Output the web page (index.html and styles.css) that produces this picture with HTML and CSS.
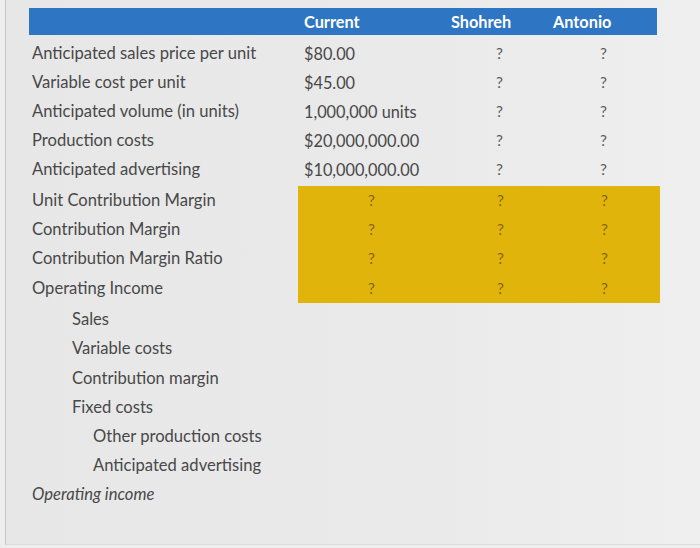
FILE: index.html
```html
<!DOCTYPE html>
<html>
<head>
<meta charset="utf-8">
<link rel="stylesheet" href="styles.css">
</head>
<body>
<div class="frame">
  <div class="sheet">
    <div class="row head">
      <div class="cell"></div>
      <div class="cell h-cur">Current</div>
      <div class="cell h-sho">Shohreh</div>
      <div class="cell h-ant">Antonio</div>
    </div>
    <div class="group first">
      <div class="row">
        <div class="cell label">Anticipated sales price per unit</div>
        <div class="cell val">$80.00</div>
        <div class="cell q3">?</div>
        <div class="cell q4">?</div>
      </div>
      <div class="row">
        <div class="cell label">Variable cost per unit</div>
        <div class="cell val">$45.00</div>
        <div class="cell q3">?</div>
        <div class="cell q4">?</div>
      </div>
      <div class="row">
        <div class="cell label">Anticipated volume (in units)</div>
        <div class="cell val">1,000,000 units</div>
        <div class="cell q3">?</div>
        <div class="cell q4">?</div>
      </div>
      <div class="row">
        <div class="cell label">Production costs</div>
        <div class="cell val">$20,000,000.00</div>
        <div class="cell q3">?</div>
        <div class="cell q4">?</div>
      </div>
      <div class="row">
        <div class="cell label">Anticipated advertising</div>
        <div class="cell val">$10,000,000.00</div>
        <div class="cell q3">?</div>
        <div class="cell q4">?</div>
      </div>
    </div>
    <div class="group yellow-group">
      <div class="row">
        <div class="cell label">Unit Contribution Margin</div>
        <div class="cell y y2">?</div>
        <div class="cell y y3">?</div>
        <div class="cell y y4">?</div>
      </div>
      <div class="row">
        <div class="cell label">Contribution Margin</div>
        <div class="cell y y2">?</div>
        <div class="cell y y3">?</div>
        <div class="cell y y4">?</div>
      </div>
      <div class="row">
        <div class="cell label">Contribution Margin Ratio</div>
        <div class="cell y y2">?</div>
        <div class="cell y y3">?</div>
        <div class="cell y y4">?</div>
      </div>
      <div class="row">
        <div class="cell label">Operating Income</div>
        <div class="cell y y2">?</div>
        <div class="cell y y3">?</div>
        <div class="cell y y4">?</div>
      </div>
    </div>
    <div class="group rest">
      <div class="line indent1">Sales</div>
      <div class="line indent1">Variable costs</div>
      <div class="line indent1">Contribution margin</div>
      <div class="line indent1">Fixed costs</div>
      <div class="line indent2">Other production costs</div>
      <div class="line indent2">Anticipated advertising</div>
      <div class="line italic">Operating income</div>
    </div>
  </div>
</div>
</body>
</html>
```

FILE: styles.css
```css
html, body {
  margin: 0;
  padding: 0;
}
body {
  width: 700px;
  height: 548px;
  overflow: hidden;
  background: #eeeeee;
  font-family: Lato, "Open Sans", sans-serif;
  font-size: 16.6px;
  color: #484848;
}
.frame {
  margin-left: 5px;
  height: 545px;
  border-left: 1px solid #c4c4c4;
  border-bottom: 1px solid #dcdcdc;
  background: linear-gradient(90deg, #e7e7e7 0%, #eaeaea 60%, #efefef 100%);
  padding-left: 23px;
  padding-top: 8px;
  box-sizing: border-box;
}
.sheet {
  width: 631px;
}
.row {
  display: grid;
  grid-template-columns: 269px 132px 115px 1fr;
  height: 29.2px;
  line-height: 29.2px;
}
.cell {
  white-space: nowrap;
}
.head {
  height: 27px;
  line-height: 27px;
  margin-right: 3px;
  background: #2e76c4;
  color: #ffffff;
  font-weight: 700;
  font-size: 16.3px;
}
.h-cur { padding-left: 6px; }
.h-sho { padding-left: 21px; }
.h-ant { padding-left: 8px; }
.group.first {
  margin-top: 3.5px;
}
.label {
  padding-left: 3px;
}
.val {
  padding-left: 6px;
  font-size: 16.3px;
}
.q3, .q4 {
  color: #5c5c5c;
  font-size: 15.5px;
}
.q3 { padding-left: 66px; }
.q4 { padding-left: 55px; }
.yellow-group {
  margin-top: 1.5px;
}
.y {
  background: #e0b40b;
  color: #85661a;
  font-size: 15.5px;
}
.y2 { padding-left: 70px; }
.y3 { padding-left: 67px; }
.y4 { padding-left: 56px; }
.rest {
  margin-top: 2.5px;
}
.line {
  height: 29.2px;
  line-height: 29.2px;
  padding-left: 3px;
}
.indent1 { padding-left: 43px; }
.indent2 { padding-left: 64px; }
.italic { font-style: italic; }
```
